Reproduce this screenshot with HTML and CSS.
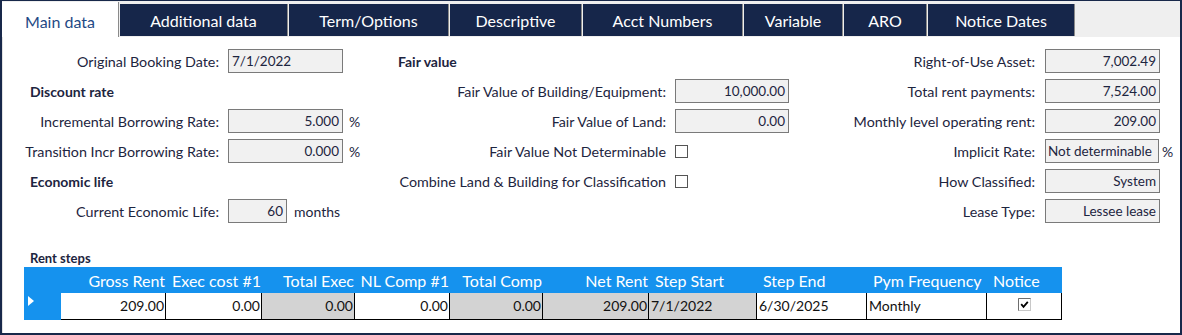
FILE: index.html
```html
<!DOCTYPE html>
<html lang="en">
<head>
    <meta charset="UTF-8">
    <title>Lease - Main data</title>
    <link rel="stylesheet" href="styles.css">
</head>
<body>
    <div class="frame">
        <div class="tabs">
            <div class="tab active">Main data</div>
            <div class="tab t-additional">Additional data</div>
            <div class="tab t-term">Term/Options</div>
            <div class="tab t-desc">Descriptive</div>
            <div class="tab t-acct">Acct Numbers</div>
            <div class="tab t-var">Variable</div>
            <div class="tab t-aro">ARO</div>
            <div class="tab t-notice">Notice Dates</div>
        </div>

        <div class="pane">
            <div class="form">
                <div class="col col-left">
                    <div class="row"><span class="lbl">Original Booking Date:</span><div class="field text">7/1/2022</div></div>
                    <div class="row head">Discount rate</div>
                    <div class="row"><span class="lbl">Incremental Borrowing Rate:</span><div class="field">5.000</div><span class="unit">%</span></div>
                    <div class="row"><span class="lbl">Transition Incr Borrowing Rate:</span><div class="field">0.000</div><span class="unit">%</span></div>
                    <div class="row head">Economic life</div>
                    <div class="row"><span class="lbl">Current Economic Life:</span><div class="field short">60</div><span class="unit months">months</span></div>
                </div>

                <div class="col col-mid">
                    <div class="row head">Fair value</div>
                    <div class="row"><span class="lbl">Fair Value of Building/Equipment:</span><div class="field">10,000.00</div></div>
                    <div class="row"><span class="lbl">Fair Value of Land:</span><div class="field">0.00</div></div>
                    <div class="row"><span class="lbl">Fair Value Not Determinable</span><span class="check"></span></div>
                    <div class="row"><span class="lbl">Combine Land &amp; Building for Classification</span><span class="check"></span></div>
                </div>

                <div class="col col-right">
                    <div class="row"><span class="lbl">Right-of-Use Asset:</span><div class="field">7,002.49</div></div>
                    <div class="row"><span class="lbl">Total rent payments:</span><div class="field">7,524.00</div></div>
                    <div class="row"><span class="lbl">Monthly level operating rent:</span><div class="field">209.00</div></div>
                    <div class="row"><span class="lbl">Implicit Rate:</span><div class="field text narrow">Not determinable</div><span class="unit pct">%</span></div>
                    <div class="row"><span class="lbl">How Classified:</span><div class="field">System</div></div>
                    <div class="row"><span class="lbl">Lease Type:</span><div class="field">Lessee lease</div></div>
                </div>
            </div>

            <div class="steps">
                <div class="steps-title">Rent steps</div>
                <table class="grid">
                    <thead>
                        <tr>
                            <th class="c-sel"></th>
                            <th class="c-gross num">Gross Rent</th>
                            <th class="c-exec num">Exec cost #1</th>
                            <th class="c-texec num">Total Exec</th>
                            <th class="c-nl num">NL Comp #1</th>
                            <th class="c-tcomp num">Total Comp</th>
                            <th class="c-net num">Net Rent</th>
                            <th class="c-start">Step Start</th>
                            <th class="c-end">Step End</th>
                            <th class="c-freq">Pym Frequency</th>
                            <th class="c-notice">Notice</th>
                        </tr>
                    </thead>
                    <tbody>
                        <tr>
                            <td class="sel"><span class="arrow"></span></td>
                            <td class="num">209.00</td>
                            <td class="num">0.00</td>
                            <td class="num ro">0.00</td>
                            <td class="num">0.00</td>
                            <td class="num ro">0.00</td>
                            <td class="num ro">209.00</td>
                            <td class="ro">7/1/2022</td>
                            <td>6/30/2025</td>
                            <td>Monthly</td>
                            <td class="center">
                                <svg class="tick" width="13" height="13" viewBox="0 0 13 13">
                                    <rect x="0.5" y="0.5" width="12" height="12" fill="#fff" stroke="#c8c8c8"/>
                                    <path d="M0.5 12.5V0.5H12.5" fill="none" stroke="#6e6e6e"/>
                                    <path d="M3.2 6.2l2.3 2.6 4.3-5" fill="none" stroke="#000" stroke-width="1.8"/>
                                </svg>
                            </td>
                        </tr>
                    </tbody>
                </table>
            </div>
        </div>
    </div>
</body>
</html>
```

FILE: styles.css
```css
* {
    box-sizing: border-box;
}
body {
    margin: 0;
    font-family: Lato, "Open Sans", sans-serif;
    color: #1d2540;
    background: #fff;
}
.frame {
    width: 1182px;
    height: 335px;
    border: 2px solid #18284a;
    border-top-width: 1px;
    display: flex;
    flex-direction: column;
}

/* tab strip */
.tabs {
    display: flex;
    height: 37px;
    background: #efefef;
    border-bottom: 1px solid #dadada;
}
.tab {
    height: 32px;
    margin-top: 3px;
    margin-right: 1px;
    background: #16264a;
    border-right: 1px solid #8a8a8a;
    color: #fff;
    font-size: 16px;
    display: flex;
    align-items: center;
    justify-content: center;
}
.tab.active {
    width: 117px;
    height: 37px;
    margin-top: 1px;
    background: #fff;
    color: #1f4a85;
    padding-top: 2px;
}
.t-additional { width: 168px; }
.t-term { width: 160px; }
.t-desc { width: 132px; }
.t-acct { width: 160px; }
.t-var { width: 99px; }
.t-aro { width: 83px; }
.t-notice { width: 147px; }

.pane {
    flex: 1;
    border-left: 1px solid #e2e2e2;
    margin-top: -1px;
    background: #fff;
}

/* form */
.form {
    display: flex;
    padding-top: 9px;
    font-size: 14px;
}
.col {
    display: flex;
    flex-direction: column;
}
.row {
    height: 30px;
    display: flex;
    align-items: center;
}
.row.head {
    font-weight: 700;
}
.lbl {
    font-size: 14.3px;
    text-align: right;
    white-space: nowrap;
}
.field {
    width: 115px;
    height: 24px;
    border: 1px solid #7a7a7a;
    background: #f1f1f1;
    padding: 0 3px;
    font-size: 13.5px;
    display: flex;
    align-items: center;
    justify-content: flex-end;
    white-space: nowrap;
    overflow: hidden;
}
.field.text {
    justify-content: flex-start;
}
.field.short {
    width: 59px;
}
.field.narrow {
    width: 114px;
    padding-left: 2px;
}
.unit {
    margin-left: 6px;
}
.unit.months {
    margin-left: 7px;
}
.unit.pct {
    margin-left: 3px;
}
.check {
    width: 13px;
    height: 13px;
    border: 1px solid #555;
    background: #fff;
}

.col-left {
    width: 377px;
}
.col-left .lbl {
    width: 216px;
    margin-right: 9px;
}
.col-left .head {
    padding-left: 27px;
}
.col-mid {
    width: 430px;
}
.col-mid .lbl {
    width: 286px;
    margin-right: 9px;
}
.col-mid .head {
    padding-left: 18px;
}
.col-mid .field {
    width: 114px;
}
.col-right .lbl {
    width: 225px;
    margin-right: 10px;
}

/* rent steps grid */
.steps {
    padding-left: 21px;
    margin-top: 24px;
}
.steps-title {
    font-size: 13px;
    font-weight: 700;
    height: 17px;
    line-height: 17px;
    padding-left: 6px;
}
.grid {
    border-spacing: 0;
    table-layout: fixed;
    width: 1038px;
    background: #1592ee;
}
.grid th {
    height: 26px;
    padding: 0 1px 0 6px;
    color: #fff;
    font-size: 16px;
    font-weight: 400;
    text-align: left;
    white-space: nowrap;
}
.grid th.num {
    text-align: right;
    padding: 0 1px 0 0;
}
.grid td {
    height: 27px;
    padding: 0 2px 2px 2px;
    background: #fff;
    color: #111;
    font-size: 14px;
    border-right: 1px solid #000;
    border-bottom: 1px solid #000;
    white-space: nowrap;
}
.grid td.num {
    text-align: right;
    padding-right: 1px;
}
.grid td.ro {
    background: #d3d3d3;
}
.grid td.center {
    text-align: center;
}
.grid td.sel {
    background: #1592ee;
    border: none;
    vertical-align: top;
    padding: 3px 0 0 4px;
}
.arrow {
    display: block;
    width: 0;
    height: 0;
    border-left: 6px solid #fff;
    border-top: 5px solid transparent;
    border-bottom: 5px solid transparent;
}
.tick {
    display: block;
    margin: 0 auto 2px;
}
.c-sel { width: 37px; }
.c-gross { width: 105px; }
.c-exec { width: 96px; }
.c-texec { width: 93px; }
.c-nl { width: 95px; }
.c-tcomp { width: 93px; }
.c-net { width: 106px; }
.c-start { width: 108px; }
.c-end { width: 110px; }
.c-freq { width: 120px; }
.c-notice { width: 75px; }
```
